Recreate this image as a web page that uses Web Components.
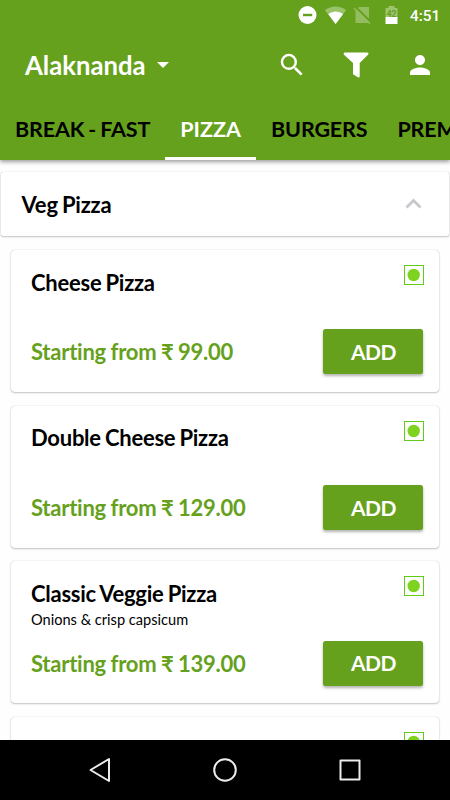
<!DOCTYPE html>
<html lang="en">
<head>
<meta charset="utf-8">
<title>Menu</title>
<style>
  html, body {
    margin: 0;
    height: 100%;
    overflow: hidden;
    background: #fefefe;
  }
  body {
    --green: #65a11d;
    font-family: Lato, "Noto Sans", sans-serif;
    font-variant-ligatures: none;
    color: #000;
  }
</style>
</head>
<body>

<menu-screen>
  <status-bar slot="top" time="4:51"></status-bar>
  <tool-bar slot="top">Alaknanda</tool-bar>
  <tab-strip slot="top">
    <tab-item>BREAK - FAST</tab-item>
    <tab-item active>PIZZA</tab-item>
    <tab-item>BURGERS</tab-item>
    <tab-item>PREM</tab-item>
  </tab-strip>

  <section-header>Veg Pizza</section-header>
  <menu-item price="99.00">Cheese Pizza</menu-item>
  <menu-item price="129.00">Double Cheese Pizza</menu-item>
  <menu-item price="139.00">Classic Veggie Pizza<span slot="note">Onions &amp; crisp capsicum</span></menu-item>
  <menu-item></menu-item>

  <nav-bar slot="bottom"></nav-bar>
</menu-screen>

<script>
(function(){

// small helper so every element does not repeat the shadow root boilerplate
function define(name, html, setup) {
    var template = document.createElement('template');
    template.innerHTML = html;

    customElements.define(name, class extends HTMLElement {
        constructor() {
            super();
            this.attachShadow({mode:'open'});
            this.shadowRoot.appendChild(template.content.cloneNode(true));
        }

        connectedCallback() {
            if (setup) setup(this, this.shadowRoot);
        }
    });
}

define('menu-screen', /*html*/`
<style>
    :host {
        display: flex;
        flex-direction: column;
        width: 450px;
        height: 800px;
        overflow: hidden;
    }
    header {
        flex: none;
        height: 160px;
        z-index: 1;
        background: var(--green);
        box-shadow: 0 2px 4px rgba(0,0,0,.38);
    }
    main {
        flex: 1;
        min-height: 0;
        overflow: hidden;
        padding-top: 12px;
    }
</style>
<header><slot name="top"></slot></header>
<main><slot></slot></main>
<slot name="bottom"></slot>
`);

define('status-bar', /*html*/`
<style>
    :host {
        display: flex;
        height: 31px;
        color: white;
        font: 500 15.300px/32px Roboto, sans-serif;
    }
    svg { flex: none; width: 410px; height: 31px; }
    text { font: 700 8.500px Roboto, sans-serif; fill: #65a11d; }
</style>
<svg viewBox="0 0 410 31" fill="#fff">
  <circle cx="307.500" cy="15" r="9"/>
  <path d="M303 13.800h9.200v2.400H303z" fill="#65a11d"/>
  <path d="M325 10.200a17 17 0 0 1 21 0L335.600 24z" opacity=".35"/>
  <path d="M328.200 14a12.500 12.500 0 0 1 15 0L335.600 24z"/>
  <path d="M359 7h10v16h-13.500V11z" fill="#94bd60"/>
  <path d="M355.500 7l16 15.500" stroke="#65a11d" stroke-width="2"/>
  <path d="M354 8.200l16 15.500" stroke="#94bd60" stroke-width="1.500"/>
  <path d="M388.500 6h6v2h3v9h-12V8h3z" fill="#9fc46f"/>
  <path d="M385.500 17h12v7h-12z"/>
  <text x="386.700" y="17.300">42</text>
</svg>
<span></span>
`, function(host, root) {
    root.querySelector('span').textContent = host.getAttribute('time');
});

define('tool-bar', /*html*/`
<style>
    :host {
        display: flex;
        align-items: center;
        box-sizing: border-box;
        height: 68px;
        margin-bottom: 1px;
        padding: 0 15px 0 25px;
        color: white;
        font-size: 25.700px;
        font-weight: 700;
        line-height: 30px;
    }
    .name { margin-top: -1px; }
    .caret {
        margin-left: 11px;
        border: 6px solid transparent;
        border-top-color: white;
        border-bottom: 0;
    }
    .icons { margin-left: auto; display: flex; align-items: center; }
    svg { display: block; fill: white; }
</style>
<span class="name"><slot></slot></span><span class="caret"></span>
<div class="icons">
  <svg width="30" height="30" viewBox="0 0 24 24"><path d="M15.500 14h-.79l-.28-.27A6.470 6.470 0 0 0 16 9.500 6.500 6.500 0 1 0 9.500 16c1.610 0 3.090-.59 4.230-1.570l.27.28v.79l5 4.990L20.490 19l-4.990-5zm-6 0C7.010 14 5 11.990 5 9.500S7.010 5 9.500 5 14 7.010 14 9.500 11.990 14 9.500 14z"/></svg>
  <svg width="26" height="28" viewBox="0 0 26 28" style="margin: 0 36px 0 36px"><path d="M1.500 1.500h23q1.800.6.500 2.300L16.700 12v13.500q-.4 1.400-1.800.8L10 23.300V12L1 3.800Q0 2.100 1.500 1.500z"/></svg>
  <svg width="30" height="30" viewBox="0 0 24 24"><path d="M12 12c2.210 0 4-1.790 4-4s-1.790-4-4-4-4 1.790-4 4 1.790 4 4 4zm0 2c-2.670 0-8 1.340-8 4v2h16v-2c0-2.660-5.330-4-8-4z"/></svg>
</div>
`);

define('tab-strip', /*html*/`
<style>
    :host { display: flex; height: 60px; overflow: hidden; }
</style>
<slot></slot>
`);

define('tab-item', /*html*/`
<style>
    :host {
        flex: none;
        box-sizing: border-box;
        height: 60px;
        padding: 0 15px;
        border-bottom: 3px solid transparent;
        font-size: 21.500px;
        font-weight: 700;
        letter-spacing: -.15px;
        word-spacing: -1px;
        line-height: 59px;
        white-space: nowrap;
    }
    :host([active]) { color: white; border-color: white; letter-spacing: .05px; }
</style>
<slot></slot>
`);

define('section-header', /*html*/`
<style>
    :host {
        display: flex;
        align-items: center;
        justify-content: space-between;
        box-sizing: border-box;
        height: 64px;
        margin: 0 1px 14px;
        padding: 0 27px 0 20.500px;
        border-radius: 2px;
        background: white;
        box-shadow: 0 0 1px rgba(0,0,0,.3), 0 1px 2px rgba(0,0,0,.22);
        font-size: 22px;
        font-weight: 700;
        letter-spacing: -.2px;
        word-spacing: -1px;
    }
    svg { margin-top: -1px; }
</style>
<slot></slot>
<svg width="17" height="11" viewBox="0 0 17 11"><path d="M1.500 9.500l7-7 7 7" fill="none" stroke="#c7c7cc" stroke-width="2.800"/></svg>
`);

define('menu-item', /*html*/`
<style>
    :host {
        display: grid;
        grid-template-columns: 1fr auto;
        grid-template-rows: 79.450px 45px;
        box-sizing: border-box;
        height: 142px;
        margin: 0 11px 13.600px;
        padding: 0 16px 0 20px;
        border-radius: 4px;
        background: white;
        box-shadow: 0 0 1px rgba(0,0,0,.28), 0 1px 2px rgba(0,0,0,.22);
    }
    .name, .price {
        font-size: 22px;
        font-weight: 700;
        letter-spacing: -.25px;
        word-spacing: -1px;
    }
    .name { padding-top: 18.500px; line-height: 27px; }
    .note {
        padding-top: 2px;
        font-size: 14.600px;
        font-weight: 400;
        letter-spacing: 0;
        word-spacing: 0;
        line-height: 21px;
    }
    .veg { display: block; justify-self: end; margin: 15px -.500px 0 0; }
    .price { color: var(--green); line-height: 45px; word-spacing: -.500px; }
    button {
        width: 100px;
        height: 45px;
        padding: 0 0 1px 1px;
        border: 0;
        border-radius: 2.500px;
        background: var(--green);
        box-shadow: 0 2px 3px rgba(0,0,0,.3);
        color: white;
        font: 700 21px Lato, sans-serif;
        letter-spacing: -.5px;
    }
    [hidden] { display: none; }
</style>
<div class="name"><slot></slot><div class="note"><slot name="note"></slot></div></div>
<svg class="veg" width="20" height="20" viewBox="0 0 20 20">
  <rect x=".5" y=".5" width="19" height="19" fill="none" stroke="#62cb1a"/>
  <circle cx="9.700" cy="10" r="6.200" fill="#7ed321"/>
</svg>
<div class="price"></div>
<button hidden></button>
`, function(host, root) {
    if (host.hasAttribute('price')) {
        root.querySelector('.price').textContent = 'Starting from ₹ ' + host.getAttribute('price');
        root.querySelector('button').textContent = 'ADD';
        root.querySelector('button').hidden = false;
    }
});

define('nav-bar', /*html*/`
<style>
    :host {
        flex: none;
        display: flex;
        align-items: center;
        justify-content: space-between;
        box-sizing: border-box;
        height: 60px;
        padding: 0 87px;
        z-index: 1;
        background: black;
    }
    svg { fill: none; stroke: #ececec; stroke-width: 2; stroke-linejoin: round; }
</style>
<svg width="26" height="26" viewBox="0 0 26 26"><path d="M22 2v22L3.500 13z"/></svg>
<svg width="26" height="26" viewBox="0 0 26 26"><circle cx="13" cy="13" r="10.800"/></svg>
<svg width="26" height="26" viewBox="0 0 26 26"><path d="M3.500 3.500h19v19h-19z"/></svg>
`);

})();
</script>
</body>
</html>
